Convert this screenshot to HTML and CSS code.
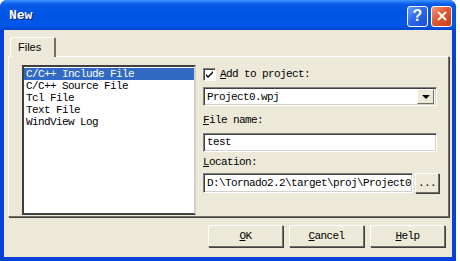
FILE: index.html
```html
<!doctype html>
<html lang="en">
    <head>
        <meta charset="UTF-8" />
        <title>New</title>
        <link rel="stylesheet" href="styles.css">
    </head>
    <body>
        <div class="window">
            <div class="titlebar">
                <span class="title">New</span>
                <div class="title-buttons">
                    <span class="tb-btn tb-help">?</span>
                    <span class="tb-btn tb-close">
                        <svg width="12" height="12" viewBox="0 0 12 12">
                            <path d="M2 2 L10 10 M10 2 L2 10" stroke="#fff" stroke-width="2" />
                        </svg>
                    </span>
                </div>
            </div>

            <div class="client">
                <div class="tabs">
                    <span class="tab">Files</span>
                </div>

                <div class="panel">
                    <ul class="listbox">
                        <li class="selected">C/C++ Include File</li>
                        <li>C/C++ Source File</li>
                        <li>Tcl File</li>
                        <li>Text File</li>
                        <li>WindView Log</li>
                    </ul>

                    <div class="fields">
                        <label class="check-row">
                            <span class="checkbox">
                                <svg width="9" height="9" viewBox="0 0 9 9">
                                    <path d="M1 4 L3 6 L8 1 L8 3 L3 8 L1 6 Z" fill="#000" />
                                </svg>
                            </span>
                            <span><u>A</u>dd to project:</span>
                        </label>

                        <div class="combo">
                            <span class="combo-text">Project0.wpj</span>
                            <span class="combo-btn"><span class="arrow"></span></span>
                        </div>

                        <div class="field-label"><u>F</u>ile name:</div>
                        <div class="textbox">test</div>

                        <div class="field-label field-label-loc"><u>L</u>ocation:</div>
                        <div class="loc-row">
                            <div class="textbox loc-box">D:\Tornado2.2\target\proj\Project0</div>
                            <span class="btn dots-btn">...</span>
                        </div>
                    </div>
                </div>

                <div class="actions">
                    <span class="btn action-btn"><u>O</u>K</span>
                    <span class="btn action-btn"><u>C</u>ancel</span>
                    <span class="btn action-btn"><u>H</u>elp</span>
                </div>
            </div>
        </div>
    </body>
</html>
```

FILE: styles.css
```css
* {
    margin: 0;
    padding: 0;
    box-sizing: border-box;
}

body {
    background-color: #fff;
    width: 460px;
    height: 261px;
    overflow: hidden;
    font-family: 'Liberation Mono', 'DejaVu Sans Mono', monospace;
    font-size: 11px;
    letter-spacing: -0.6px;
    color: #000;
}

.window {
    width: 456px;
    height: 261px;
    display: flex;
    flex-direction: column;
    background-color: #0842d6;
    border-radius: 7px 7px 0 0;
    overflow: hidden;
}

/* Title bar */
.titlebar {
    height: 30px;
    display: flex;
    align-items: center;
    justify-content: space-between;
    padding: 0 4px 0 9px;
    background: linear-gradient(to bottom, #3d95ff 0%, #0a5ae9 14%, #0054e3 45%, #0058ea 85%, #0046cc 100%);
}

.title {
    color: #fff;
    font-weight: bold;
    font-size: 13px;
    letter-spacing: 0;
    text-shadow: 1px 1px #0a1e6a;
}

.title-buttons {
    display: flex;
    gap: 3px;
    margin-top: 2px;
}

.tb-btn {
    width: 21px;
    height: 21px;
    border: 1px solid #fff;
    border-radius: 3px;
    display: flex;
    align-items: center;
    justify-content: center;
    color: #fff;
}

.tb-help {
    background: linear-gradient(135deg, #6aa0ff 0%, #2a64e8 50%, #1a4fd6 100%);
    font-family: 'Liberation Sans', sans-serif;
    font-weight: bold;
    font-size: 16px;
    letter-spacing: 0;
}

.tb-close {
    background: linear-gradient(135deg, #f09a7a 0%, #e0572f 45%, #c83e1a 100%);
}

/* Client area */
.client {
    flex: 1;
    margin: 0 4px 4px;
    background-color: #ece9d8;
    display: flex;
    flex-direction: column;
}

.tabs {
    display: flex;
    padding: 7px 0 0 6px;
}

.tab {
    width: 46px;
    height: 20px;
    padding: 3px 0 0 7px;
    font-family: 'Liberation Sans', sans-serif;
    font-size: 11px;
    letter-spacing: 0;
    border-top: 1px solid #fff;
    border-left: 1px solid #fff;
    border-right: 2px solid #716f64;
    border-radius: 2px 2px 0 0;
    margin-bottom: -1px;
    position: relative;
    z-index: 1;
    background-color: #ece9d8;
}

.panel {
    margin: 0 3px 0 4px;
    height: 161px;
    display: flex;
    gap: 7px;
    padding: 8px 0 0 13px;
    border-top: 1px solid #fff;
    border-left: 1px solid #fff;
    border-right: 1px solid #716f64;
    border-bottom: 1px solid #716f64;
    box-shadow: 1px 1px 0 #404040;
}

.listbox {
    list-style: none;
    width: 174px;
    height: 150px;
    background-color: #fff;
    border: 2px solid;
    border-color: #404040 #d4d0c8 #404040 #404040;
    padding-top: 1px;
}

.listbox li {
    height: 12px;
    line-height: 12px;
    padding-left: 2px;
    white-space: nowrap;
}

.listbox li.selected {
    background-color: #316ac5;
    color: #fff;
}

/* Right-hand fields */
.fields {
    width: 236px;
    display: flex;
    flex-direction: column;
}

.check-row {
    height: 18px;
    display: flex;
    align-items: center;
    gap: 4px;
}

.checkbox {
    width: 13px;
    height: 13px;
    background-color: #fff;
    border: 1px solid;
    border-color: #808080 #fff #fff #808080;
    box-shadow: inset 1px 1px #404040;
    display: flex;
    align-items: center;
    justify-content: center;
}

.combo {
    width: 234px;
    height: 19px;
    margin-top: 4px;
    display: flex;
    align-items: center;
    justify-content: space-between;
    background-color: #fff;
    border: 1px solid;
    border-color: #808080 #fff #fff #808080;
    box-shadow: inset 1px 1px #404040, inset -1px -1px #d4d0c8;
    padding: 0 2px 0 3px;
}

.combo-btn {
    width: 17px;
    height: 15px;
    background-color: #ece9d8;
    border: 1px solid;
    border-color: #fff #716f64 #716f64 #fff;
    display: flex;
    align-items: center;
    justify-content: center;
}

.arrow {
    width: 0;
    height: 0;
    border-left: 4px solid transparent;
    border-right: 4px solid transparent;
    border-top: 4px solid #000;
}

.field-label {
    height: 14px;
    line-height: 14px;
    margin-top: 7px;
}

.field-label-loc {
    margin-top: 3px;
}

.textbox {
    width: 234px;
    height: 19px;
    margin-top: 6px;
    line-height: 17px;
    padding-left: 3px;
    background-color: #fff;
    border: 1px solid;
    border-color: #808080 #fff #fff #808080;
    box-shadow: inset 1px 1px #404040, inset -1px -1px #d4d0c8;
    white-space: nowrap;
    overflow: hidden;
}

.loc-row {
    display: flex;
    gap: 2px;
    margin-top: 4px;
}

.loc-box {
    width: 210px;
    height: 20px;
    margin-top: 0;
    line-height: 18px;
}

.btn {
    background-color: #ece9d8;
    border: 1px solid;
    border-color: #fff #716f64 #716f64 #fff;
    box-shadow: 1px 1px 0 #404040;
    display: flex;
    align-items: center;
    justify-content: center;
}

.dots-btn {
    width: 24px;
    height: 20px;
}

.actions {
    display: flex;
    justify-content: flex-end;
    gap: 6px;
    padding: 8px 7px 0 0;
}

.action-btn {
    width: 75px;
    height: 22px;
}
```
